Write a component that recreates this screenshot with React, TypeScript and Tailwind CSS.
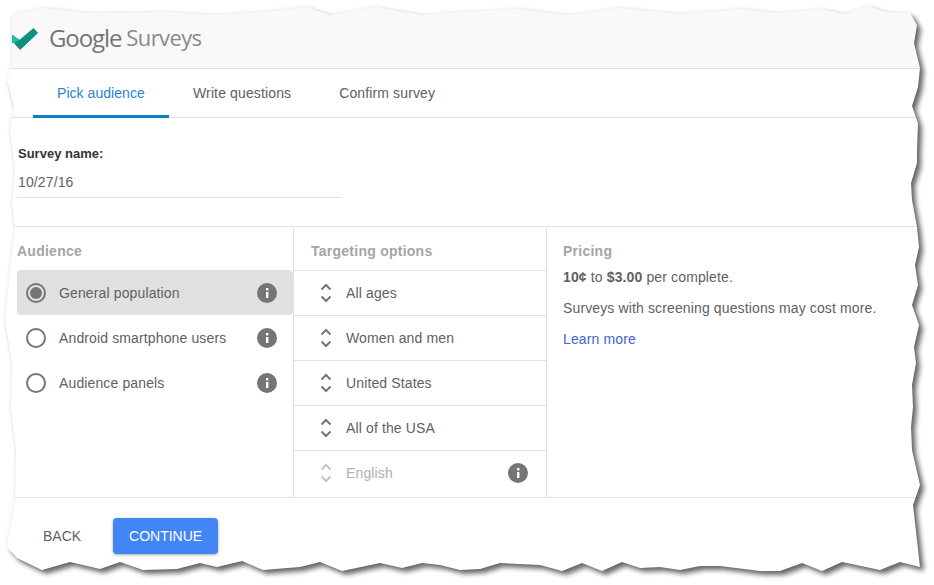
const font = { fontFamily: '"Liberation Sans", Arial, sans-serif' }

// outline of the torn screenshot paper
const PAPER =
  'M12 15L43 8L90 13L167 12L213 15L260 12L307 7L330 15L377 7L423 15L460 12L520 9L570 15L620 8L680 14L740 9L780 13L823 9L845 14L868 6L887 12L910 13L917 25L914 43L920 68L918 87L912 106L918 123L917 150L917 163L911 183L912 200L917 227L919 247L915 265L918 285L912 305L919 325L914 347L916 363L912 385L913 407L911 427L912 450L915 463L920 485L913 505L920 567L900 562L880 570L842 562L822 571L802 563L780 571L760 571L720 566L700 566L680 570L660 567L640 568L622 562L602 571L582 563L562 571L540 565L500 563L480 569L460 570L440 565L422 563L402 568L380 563L342 571L320 562L300 567L263 570L242 561L217 567L200 563L177 569L143 570L120 562L100 569L70 562L42 570L17 558L7 547L15 500L16 450L11 410L12 363L5 320L12 253L15 227L12 202L15 170L10 130L14 107L7 80L12 63Z'

function TornEdge() {
  return (
    <svg className="absolute inset-0 pointer-events-none" width="934" height="585" viewBox="0 0 934 585">
      <defs>
        <clipPath id="outside">
          <path clipRule="evenodd" d={`M0 0H934V585H0Z ${PAPER}`} />
        </clipPath>
        <filter id="soft" x="-5%" y="-5%" width="110%" height="110%">
          <feGaussianBlur stdDeviation="2.5" />
        </filter>
        <filter id="faint" x="-5%" y="-5%" width="110%" height="110%">
          <feGaussianBlur stdDeviation="2" />
        </filter>
      </defs>
      <g clipPath="url(#outside)">
        <rect width="934" height="585" fill="#fff" />
        <path d={PAPER} fill="#000" opacity="0.1" filter="url(#faint)" />
        <path d={PAPER} fill="#000" opacity="0.58" transform="translate(4 4)" filter="url(#soft)" />
      </g>
    </svg>
  )
}

function Info() {
  return (
    <svg width="20" height="20" viewBox="0 0 20 20" className="shrink-0">
      <circle cx="10" cy="10" r="10" fill="#757575" />
      <rect x="9" y="9" width="2.4" height="6" fill="#fff" />
      <rect x="9" y="5" width="2.4" height="2.4" fill="#fff" />
    </svg>
  )
}

function Radio({ on }: { on?: boolean }) {
  return (
    <span className="w-5 h-5 rounded-full border-2 border-[#757575] flex items-center justify-center shrink-0">
      {on && <span className="w-3 h-3 rounded-full bg-[#757575]" />}
    </span>
  )
}

function Updown({ faded }: { faded?: boolean }) {
  return (
    <svg width="12" height="20" viewBox="0 0 12 20" className="shrink-0" fill="none" stroke={faded ? '#c4c4c4' : '#757575'} strokeWidth="2">
      <path d="M1.5 6.5L6 2L10.5 6.5" />
      <path d="M1.5 13.5L6 18L10.5 13.5" />
    </svg>
  )
}

const audiences = [
  { label: 'General population', on: true },
  { label: 'Android smartphone users' },
  { label: 'Audience panels' },
]

const targeting = ['All ages', 'Women and men', 'United States', 'All of the USA']

export default function App() {
  return (
    <div className="relative w-[934px] h-[585px] overflow-hidden bg-white text-sm tracking-[0.13px] text-[#616161]" style={font}>
      {/* Header */}
      <div className="h-[69px] bg-[#f9f9f9] border-b border-[#e0e0e0] flex items-center pl-[13px] pt-[8px]">
        <svg width="26" height="26" viewBox="0 0 26 26" className="shrink-0 overflow-visible">
          <path d="M-3 8L7 15L1 18L-3 18Z" fill="#1bbfa3" />
          <path d="M1.5 18L7 15L20.5 3.5L24.5 8L7 24.5Z" fill="#0f8f80" stroke="#0f8f80" strokeWidth="1" strokeLinejoin="round" />
        </svg>
        <span className="ml-[10px] text-[24px] tracking-[-1.1px] text-[#757575]" style={{ fontFamily: '"Open Sans", sans-serif' }}>
          Google
        </span>
        <span className="ml-[5px] text-[22px] tracking-[-0.6px] text-[#8a8a8a]" style={{ fontFamily: '"Open Sans", sans-serif' }}>
          Surveys
        </span>
      </div>

      {/* Tabs */}
      <div className="h-[49px] border-b border-[#e0e0e0] flex pl-[33px]">
        <div className="h-[49px] w-[136px] px-6 pt-[2px] flex items-center border-b-[3px] border-[#0b7dcc] text-[#2a83cf] tracking-[0.05px]">Pick audience</div>
        <div className="h-[48px] px-6 flex items-center">Write questions</div>
        <div className="h-[48px] px-6 flex items-center">Confirm survey</div>
      </div>

      {/* Survey name */}
      <div className="h-[109px] border-b border-[#e0e0e0] pl-[17px] pt-[28px]">
        <div className="pl-px text-[13px] tracking-normal leading-[16px] font-bold text-[#333]">Survey name:</div>
        <div className="w-[325px] h-[31px] mt-[5px] pl-px pt-[5px] border-b border-[#dfdfdf] leading-[20px]">10/27/16</div>
      </div>

      {/* Columns */}
      <div className="h-[271px] border-b border-[#e0e0e0] flex">
        <div className="w-[294px] border-r border-[#e0e0e0] pl-[17px]">
          <div className="h-[43px] pt-[14px] leading-[20px] tracking-[0.25px] font-bold text-[#a8a3a3]">Audience</div>
          {audiences.map((a) => (
            <div key={a.label} className={`h-[45px] flex items-center pl-[9px] pr-[16px] rounded-sm ${a.on ? 'bg-[#e0e0e0]' : ''}`}>
              <Radio on={a.on} />
              <span className="ml-[13px] flex-1">{a.label}</span>
              <Info />
            </div>
          ))}
        </div>
        <div className="w-[253px] border-r border-[#e0e0e0]">
          <div className="h-[44px] pl-[17px] pt-[14px] leading-[20px] tracking-[0.25px] font-bold text-[#a8a3a3] border-b border-[#e0e0e0]">Targeting options</div>
          {targeting.map((t) => (
            <div key={t} className="h-[45px] flex items-center pl-[26px] border-b border-[#e0e0e0]">
              <Updown />
              <span className="ml-[14px]">{t}</span>
            </div>
          ))}
          <div className="h-[44px] flex items-center pl-[26px] pr-[18px] text-[#b0b0b0]">
            <Updown faded />
            <span className="ml-[14px] flex-1">English</span>
            <Info />
          </div>
        </div>
        <div className="flex-1 pl-[16px]">
          <div className="pt-[14px] leading-[20px] tracking-[0.25px] font-bold text-[#a8a3a3]">Pricing</div>
          <p className="mt-[6px] leading-[20px]">
            <b>10¢</b> to <b>$3.00</b> per complete.
          </p>
          <p className="mt-[11px] leading-[20px]">Surveys with screening questions may cost more.</p>
          <p className="mt-[11px] leading-[20px] text-[#3f66c9]">Learn more</p>
        </div>
      </div>

      {/* Footer */}
      <div className="flex items-center pl-[27px] pt-[20px] tracking-normal">
        <button className="h-[36px] px-4">BACK</button>
        <button className="ml-[16px] h-[36px] w-[105px] rounded-sm bg-[#4285f4] text-white shadow-[0_1px_3px_rgba(0,0,0,0.35)]">CONTINUE</button>
      </div>

      <TornEdge />
    </div>
  )
}
